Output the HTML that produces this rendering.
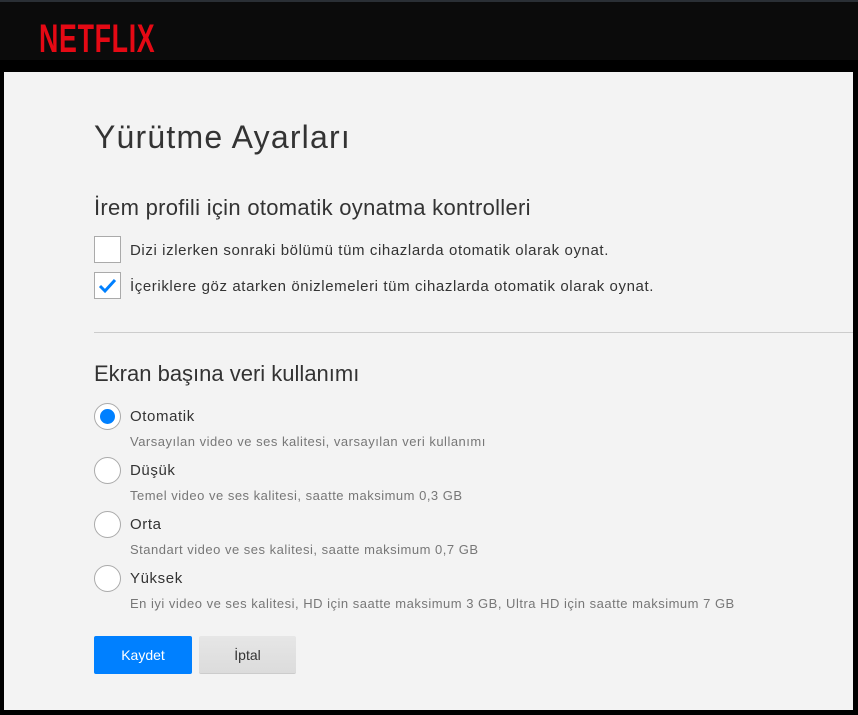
<!DOCTYPE html>
<html><head><meta charset="utf-8"><style>
*{margin:0;padding:0;box-sizing:border-box}
body{width:858px;height:715px;background:#000;font-family:"Liberation Sans",sans-serif;position:relative;overflow:hidden}
.hdr{position:absolute;left:0;top:0;width:858px;height:60px;background:#0b0b0b;border-top:2px solid #2a2f35}
.logo{position:absolute;left:39px;top:15px;font-size:40px;font-weight:bold;color:#e50914;transform:scaleX(0.67);transform-origin:left;letter-spacing:1px;line-height:44px}
.panel{position:absolute;left:4px;top:72px;width:849px;height:638px;background:#f3f3f3}
.a{position:absolute;color:#333;white-space:nowrap}
.cb{position:absolute;left:94px;width:27px;height:27px;border:1px solid #aaa;background:#fff}
.rb{position:absolute;left:94px;width:27px;height:27px;border:1px solid #aaa;border-radius:50%;background:#fff}
.lbl{font-size:15px;color:#333;letter-spacing:0.6px}
.sub{font-size:13px;color:#777;letter-spacing:0.5px}
.btn{position:absolute;top:636px;height:38px;border-radius:2px;font-size:14px;text-align:center;line-height:38px}
</style></head><body>
<div class="hdr"><div class="logo">NETFLIX</div></div>
<div class="panel"></div>
<div class="a" style="left:94px;top:119px;font-size:32px;letter-spacing:1.2px">Yürütme Ayarları</div>
<div class="a" style="left:94px;top:195px;font-size:22px;letter-spacing:0.3px">İrem profili için otomatik oynatma kontrolleri</div>
<div class="cb" style="top:236px"></div>
<div class="a lbl" style="left:130px;top:242px">Dizi izlerken sonraki bölümü tüm cihazlarda otomatik olarak oynat.</div>
<div class="cb" style="top:272px"><svg width="25" height="25" viewBox="0 0 25 25"><path d="M5 13 L10 18 L20 7" stroke="#0080ff" stroke-width="3" fill="none"/></svg></div>
<div class="a lbl" style="left:130px;top:278px">İçeriklere göz atarken önizlemeleri tüm cihazlarda otomatik olarak oynat.</div>
<div style="position:absolute;left:94px;top:332px;width:759px;height:1px;background:#ccc"></div>
<div class="a" style="left:94px;top:361px;font-size:22px;">Ekran başına veri kullanımı</div>
<div class="rb" style="top:403px"><div style="position:absolute;left:5px;top:5px;width:15px;height:15px;border-radius:50%;background:#0080ff"></div></div>
<div class="a lbl" style="left:130px;top:408px">Otomatik</div>
<div class="a sub" style="left:130px;top:434px">Varsayılan video ve ses kalitesi, varsayılan veri kullanımı</div>
<div class="rb" style="top:457px"></div>
<div class="a lbl" style="left:130px;top:462px">Düşük</div>
<div class="a sub" style="left:130px;top:488px">Temel video ve ses kalitesi, saatte maksimum 0,3 GB</div>
<div class="rb" style="top:511px"></div>
<div class="a lbl" style="left:130px;top:516px">Orta</div>
<div class="a sub" style="left:130px;top:542px">Standart video ve ses kalitesi, saatte maksimum 0,7 GB</div>
<div class="rb" style="top:565px"></div>
<div class="a lbl" style="left:130px;top:570px">Yüksek</div>
<div class="a sub" style="left:130px;top:596px">En iyi video ve ses kalitesi, HD için saatte maksimum 3 GB, Ultra HD için saatte maksimum 7 GB</div>
<div class="btn" style="left:94px;width:98px;background:#0080ff;color:#fff">Kaydet</div>
<div class="btn" style="left:199px;width:97px;background:linear-gradient(#e6e6e6,#dcdcdc);color:#333;border-bottom:1px solid #ccc">İptal</div>
</body></html>
